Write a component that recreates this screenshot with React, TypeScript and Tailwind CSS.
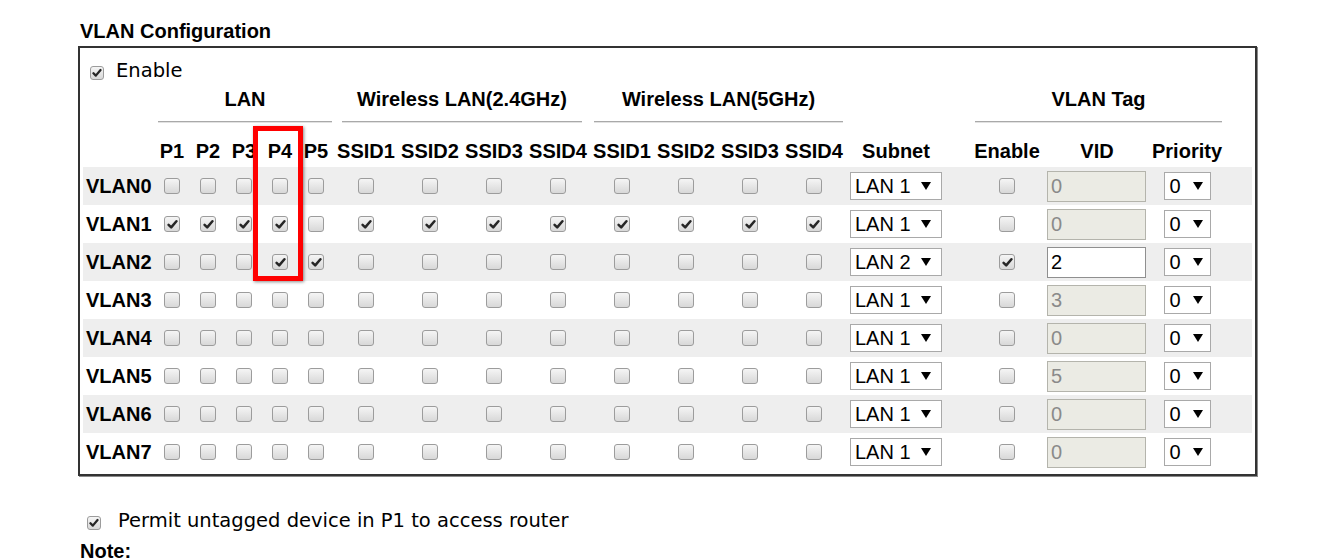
import clsx from "clsx";

const GRID =
  "grid grid-cols-[71px_repeat(5,36px)_repeat(8,64px)_100px_24px_74px_106px_74px_28px]";

const ports = ["P1", "P2", "P3", "P4", "P5"];
const ssids = ["SSID1", "SSID2", "SSID3", "SSID4", "SSID1", "SSID2", "SSID3", "SSID4"];

type Row = {
  name: string;
  ports: number[];
  ssids: number[];
  subnet: string;
  tag: boolean;
  vid: string;
};

const rows: Row[] = [
  { name: "VLAN0", ports: [], ssids: [], subnet: "LAN 1", tag: false, vid: "0" },
  {
    name: "VLAN1",
    ports: [0, 1, 2, 3],
    ssids: [0, 1, 2, 3, 4, 5, 6, 7],
    subnet: "LAN 1",
    tag: false,
    vid: "0",
  },
  { name: "VLAN2", ports: [3, 4], ssids: [], subnet: "LAN 2", tag: true, vid: "2" },
  { name: "VLAN3", ports: [], ssids: [], subnet: "LAN 1", tag: false, vid: "3" },
  { name: "VLAN4", ports: [], ssids: [], subnet: "LAN 1", tag: false, vid: "0" },
  { name: "VLAN5", ports: [], ssids: [], subnet: "LAN 1", tag: false, vid: "5" },
  { name: "VLAN6", ports: [], ssids: [], subnet: "LAN 1", tag: false, vid: "0" },
  { name: "VLAN7", ports: [], ssids: [], subnet: "LAN 1", tag: false, vid: "0" },
];

const Check = ({ on, small }: { on?: boolean; small?: boolean }) => (
  <span
    className={clsx(
      "inline-flex shrink-0 items-center justify-center rounded-[3px] border border-[#9c9c9c] bg-linear-to-b from-[#f5f5f5] to-[#d8d8d8]",
      small ? "h-[14px] w-[14px]" : "h-[16px] w-[16px]"
    )}
  >
    {on && (
      <svg width={small ? 10 : 11} height={small ? 10 : 11} viewBox="0 0 11 11">
        <polyline
          points="1.6,5.8 4.2,8.4 9.4,2.2"
          fill="none"
          stroke="#262626"
          strokeWidth="2.5"
          strokeLinecap="round"
          strokeLinejoin="round"
        />
      </svg>
    )}
  </span>
);

const Arrow = () => (
  <svg width="10" height="8" viewBox="0 0 10 8" className="shrink-0">
    <polygon points="0,0 10,0 5,8" fill="#000" />
  </svg>
);

const Select = ({ value, wide }: { value: string; wide?: boolean }) => (
  <div
    className={clsx(
      "flex h-[28px] items-center border border-[#a9a9a9] bg-white text-[20px] leading-none text-black",
      wide ? "w-[92px] gap-[10px] pl-[4px]" : "w-[47px] gap-[12px] pl-[5px]"
    )}
  >
    <span>{value}</span>
    <Arrow />
  </div>
);

const GroupHead = ({ label, cls }: { label: string; cls: string }) => (
  <div className={clsx("flex flex-col", cls)}>
    <div className="text-center leading-[24px]">{label}</div>
    <div className="mt-[10px] border-t border-b border-t-[#a9a9a9] border-b-[#e2e2e2]" />
  </div>
);

export default function App() {
  return (
    <div className="relative h-[560px] w-[1317px] overflow-hidden bg-white pl-[78px] pt-[19px] font-['Liberation_Sans',Arial,sans-serif] text-[20px] text-black">
      <div className="ml-[2px] font-bold leading-[24px]">VLAN Configuration</div>

      <div className="mt-[3px] w-[1179px] border-2 border-[#333] px-[3px] pb-[3px] shadow-[1px_1px_0_#8a8a8a]">
        <div className="flex items-start pl-[7px] pt-[11px] font-['DejaVu_Sans',Verdana,sans-serif] text-[19.5px] leading-[24px]">
          <span className="mt-[1px]">
            <Check on small />
          </span>
          <span className="ml-[12px]">Enable</span>
        </div>

        <div className={clsx(GRID, "pt-[3px] font-bold")}>
          <GroupHead label="LAN" cls="col-start-2 col-span-5 ml-[4px] mr-[2px]" />
          <GroupHead label="Wireless LAN(2.4GHz)" cls="col-start-7 col-span-4 ml-[8px] mr-[8px]" />
          <GroupHead label="Wireless LAN(5GHz)" cls="col-start-11 col-span-4 ml-[4px] mr-[3px]" />
          <GroupHead label="VLAN Tag" cls="col-start-17 col-span-3 ml-[5px] mr-[2px]" />
        </div>

        <div className={clsx(GRID, "mt-[16px] mb-[4px] font-bold leading-[24px]")}>
          <div />
          {ports.map((p) => (
            <div key={p} className="text-center">
              {p}
            </div>
          ))}
          {ssids.map((s, i) => (
            <div key={i} className="text-center">
              {s}
            </div>
          ))}
          <div className="text-center">Subnet</div>
          <div />
          <div className="text-center">Enable</div>
          <div className="text-center">VID</div>
          <div className="text-center">Priority</div>
          <div />
        </div>

        {rows.map((r, ri) => (
          <div
            key={r.name}
            className={clsx(GRID, "h-[38px] items-center", ri % 2 === 0 ? "bg-[#eeeeee]" : "bg-white")}
          >
            <div className="pl-[3px] font-bold">{r.name}</div>
            {ports.map((p, i) => (
              <div key={p} className="flex justify-center">
                <Check on={r.ports.includes(i)} />
              </div>
            ))}
            {ssids.map((s, i) => (
              <div key={i} className="flex justify-center">
                <Check on={r.ssids.includes(i)} />
              </div>
            ))}
            <div className="pl-[4px]">
              <Select value={r.subnet} wide />
            </div>
            <div />
            <div className="flex justify-center">
              <Check on={r.tag} />
            </div>
            <div className="pl-[3px]">
              <div
                className={clsx(
                  "flex h-[31px] w-[99px] items-center border pl-[3px] text-[20px] leading-none",
                  r.tag
                    ? "border-[#8f8f8f] bg-white text-black"
                    : "border-[#b4b4ac] bg-[#ebebe4] text-[#8a8a8a]"
                )}
              >
                {r.vid}
              </div>
            </div>
            <div className="flex justify-center">
              <Select value="0" />
            </div>
            <div />
          </div>
        ))}
      </div>

      <div className="mt-[33px] flex items-start pl-[9px] font-['DejaVu_Sans',Verdana,sans-serif] text-[19.5px] leading-[24px]">
        <span className="mt-[1px]">
          <Check on small />
        </span>
        <span className="ml-[17px]">Permit untagged device in P1 to access router</span>
      </div>
      <div className="mt-[5px] ml-[2px] font-bold leading-[24px]">Note:</div>

      <div className="absolute left-[253px] top-[126px] h-[155px] w-[50px] border-[5px] border-[#ff0000] shadow-[1px_1px_3px_rgba(0,0,0,0.45)]" />
    </div>
  );
}
